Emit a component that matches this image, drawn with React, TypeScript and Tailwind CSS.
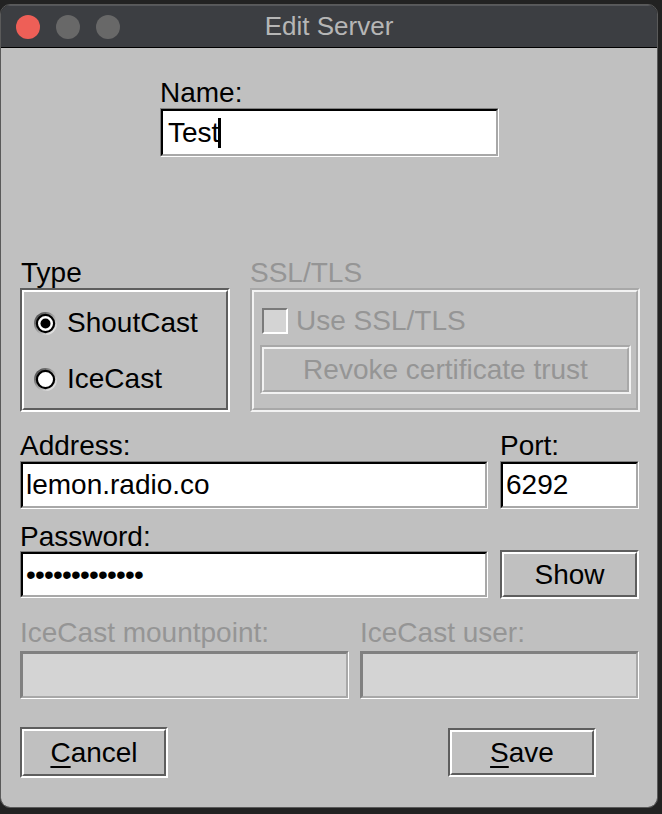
import type { ReactNode } from "react";

const FONT = { fontFamily: '"Liberation Sans", Arial, Helvetica, sans-serif' };

// Tk-style sunken entry
const Entry = ({ w, h, disabled, children }: { w: string; h: string; disabled?: boolean; children?: ReactNode }) => (
  <div
    className={`${w} ${h} flex border border-t-[#808080] border-l-[#808080] border-r-white border-b-white ${
      disabled ? "border-t-[#9a9a9a] border-l-[#9a9a9a]" : ""
    }`}
  >
    <div
      className={`flex-1 flex items-center border-2 border-b-[#a8a8a8] border-r-[#a8a8a8] ${
        disabled ? "bg-[#d4d4d4] border-t-[#808080] border-l-[#808080]" : "bg-white border-t-black border-l-black"
      }`}
    >
      {children}
    </div>
  </div>
);

// groove border used by buttons and group boxes
const Groove = ({ className, muted, children }: { className: string; muted?: boolean; children?: ReactNode }) => (
  <div
    className={`${className} flex border-2 ${
      muted
        ? "border-t-[#a8a8a8] border-l-[#a8a8a8] border-r-[#f2f2f2] border-b-[#f2f2f2]"
        : "border-t-[#5e5e5e] border-l-[#5e5e5e] border-r-white border-b-white"
    }`}
  >
    <div
      className={`flex-1 flex flex-col border-2 ${
        muted
          ? "border-t-[#f2f2f2] border-l-[#f2f2f2] border-r-[#a8a8a8] border-b-[#a8a8a8]"
          : "border-t-white border-l-white border-r-[#5e5e5e] border-b-[#5e5e5e]"
      }`}
    >
      {children}
    </div>
  </div>
);

const Radio = ({ checked }: { checked?: boolean }) => (
  <svg width="23" height="23" viewBox="0 0 23 23" className="shrink-0">
    <defs>
      <linearGradient id="radioShade" x1="0" y1="0" x2="1" y2="1">
        <stop offset="0" stopColor="#2e2e2e" />
        <stop offset="0.45" stopColor="#9a9a9a" />
        <stop offset="1" stopColor="#ffffff" />
      </linearGradient>
    </defs>
    <circle cx="11.5" cy="11.5" r="11.5" fill="url(#radioShade)" />
    <circle cx="11.5" cy="11.5" r="8.6" fill="#fff" stroke="#000" strokeWidth="2.2" />
    {checked && <circle cx="11.5" cy="11.5" r="5" fill="#000" />}
  </svg>
);

export default function App() {
  return (
    <div className="w-[662px] h-[814px] bg-[#222222] overflow-hidden text-[28px] text-black" style={FONT}>
      <div className="mt-[4px] w-[658px] h-[804px] rounded-[10px] overflow-hidden border border-[#5a5a5a] flex flex-col">
        {/* title bar */}
        <div className="h-[43px] shrink-0 bg-[#3c3e42] border-t border-t-[#55575b] border-b border-black flex items-center relative">
          <div className="flex items-center gap-[16px] pl-[15px]">
            <span className="w-[24px] h-[24px] rounded-full bg-[#ee5f57]" />
            <span className="w-[24px] h-[24px] rounded-full bg-[#686868]" />
            <span className="w-[24px] h-[24px] rounded-full bg-[#686868]" />
          </div>
          <div className="absolute inset-0 flex items-center justify-center text-[26px] text-[#b6b6b6] pointer-events-none">
            Edit Server
          </div>
        </div>

        {/* body */}
        <div className="flex-1 bg-[#c0c0c0] pl-[19px] pt-[29px]">
          <div className="w-[619px] flex flex-col">
            {/* name */}
            <div className="ml-[140px] flex flex-col">
              <div className="h-[31px] leading-[31px]">Name:</div>
              <Entry w="w-[339px]" h="h-[49px]">
                <span className="pl-[5px] leading-[32px] flex items-center">
                  Test
                  <span className="inline-block w-[3px] h-[30px] bg-black -ml-[1px]" />
                </span>
              </Entry>
            </div>

            {/* type + ssl */}
            <div className="mt-[100px] flex gap-[20px]">
              <div className="flex flex-col">
                <div className="h-[31px] leading-[31px] pl-[1px]">Type</div>
                <Groove className="w-[210px] h-[124px]">
                  <div className="pt-[3px] flex flex-col">
                    <div className="h-[56px] flex items-center pl-[10px] gap-[10px]">
                      <Radio checked />
                      <span>ShoutCast</span>
                    </div>
                    <div className="h-[56px] flex items-center pl-[10px] gap-[10px]">
                      <Radio />
                      <span>IceCast</span>
                    </div>
                  </div>
                </Groove>
              </div>
              <div className="flex flex-col text-[#959595]">
                <div className="h-[31px] leading-[31px]">SSL/TLS</div>
                <Groove className="w-[390px] h-[124px]" muted>
                  <div className="pt-[4px] pl-[6px] flex flex-col">
                    <div className="h-[49px] flex items-center pl-[2px] gap-[8px]">
                      <span className="w-[26px] h-[26px] border-2 border-t-[#7a7a7a] border-l-[#7a7a7a] border-r-white border-b-white bg-[#d4d4d4]" />
                      <span>Use SSL/TLS</span>
                    </div>
                    <Groove className="w-[371px] h-[49px]" muted>
                      <div className="flex-1 flex items-center justify-center">Revoke certificate trust</div>
                    </Groove>
                  </div>
                </Groove>
              </div>
            </div>

            {/* address / port */}
            <div className="mt-[19px] grid grid-cols-[468px_139px] gap-x-[12px]">
              <div className="h-[30px] leading-[30px]">Address:</div>
              <div className="h-[30px] leading-[30px]">Port:</div>
              <Entry w="w-[468px]" h="h-[48px]">
                <span className="pl-[3px]">lemon.radio.co</span>
              </Entry>
              <Entry w="w-[139px]" h="h-[48px]">
                <span className="pl-[3px]">6292</span>
              </Entry>
            </div>

            {/* password */}
            <div className="mt-[15px] h-[26px] leading-[26px]">Password:</div>
            <div className="flex items-center gap-[12px]">
              <Entry w="w-[468px]" h="h-[47px]">
                <span className="pl-[3px] tracking-[-0.8px]">•••••••••••••</span>
              </Entry>
              <Groove className="w-[139px] h-[49px]">
                <div className="flex-1 flex items-center justify-center">Show</div>
              </Groove>
            </div>

            {/* icecast */}
            <div className="mt-[20px] grid grid-cols-[329px_279px] gap-x-[11px] text-[#959595]">
              <div className="h-[28px] leading-[28px] mb-[4px]">IceCast mountpoint:</div>
              <div className="h-[28px] leading-[28px] mb-[4px]">IceCast user:</div>
              <Entry w="w-[329px]" h="h-[48px]" disabled />
              <Entry w="w-[279px]" h="h-[48px]" disabled />
            </div>

            {/* buttons */}
            <div className="mt-[28px] flex items-center">
              <Groove className="w-[148px] h-[51px]">
                <div className="flex-1 flex items-center justify-center">
                  <span>
                    <span className="underline underline-offset-[4px] decoration-2">C</span>ancel
                  </span>
                </div>
              </Groove>
              <Groove className="ml-[280px] w-[148px] h-[49px]">
                <div className="flex-1 flex items-center justify-center">
                  <span>
                    <span className="underline underline-offset-[4px] decoration-2">S</span>ave
                  </span>
                </div>
              </Groove>
            </div>
          </div>
        </div>
      </div>
    </div>
  );
}
